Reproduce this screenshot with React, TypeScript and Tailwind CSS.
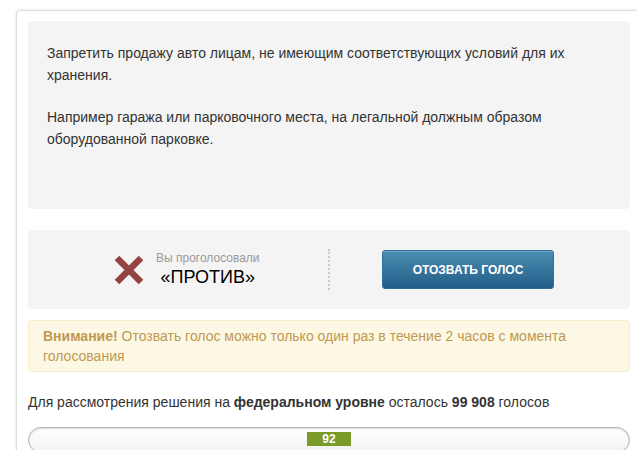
import React from "react";

function CrossMark() {
  return (
    <svg width="30" height="30" viewBox="0 0 30 30" className="shrink-0">
      <path d="M3 3 L27 27 M27 3 L3 27" stroke="#944343" strokeWidth="6.5" strokeLinecap="butt" />
    </svg>
  );
}

export default function App() {
  return (
    <div className="w-[637px] h-[450px] overflow-hidden bg-white font-['Liberation_Sans',Arial,sans-serif]">
      <div className="ml-[16px] mt-[10px] w-[626px] rounded-[4px] border border-[#dcdcdc] bg-white px-[11px] pt-[10px] pb-[20px] shadow-[0_0_3px_rgba(0,0,0,0.12)]">
        {/* description */}
        <div className="h-[188px] rounded-[4px] bg-[#f4f4f4] pl-[19px] pr-[19px] pt-[21px] text-[14px] leading-[22px] text-[#333]">
          <p>Запретить продажу авто лицам, не имеющим соответствующих условий для их хранения.</p>
          <p className="mt-[20px]">Например гаража или парковочного места, на легальной должным образом оборудованной парковке.</p>
        </div>

        {/* vote status */}
        <div className="mt-[21px] flex h-[79px] items-center rounded-[4px] bg-[#f4f4f4]">
          <div className="flex w-[300px] items-center pl-[86px]">
            <CrossMark />
            <div className="ml-[12px] flex flex-col items-center">
              <span className="text-[12px] leading-[14px] text-[#999]">Вы проголосовали</span>
              <span className="mt-[1px] text-[18px] leading-[22px] text-black">«ПРОТИВ»</span>
            </div>
          </div>
          <div className="h-[41px] border-l-2 border-dotted border-[#c8c8c8]" />
          <button className="ml-[52px] h-[39px] w-[172px] rounded-[3px] border border-[#2f6f9a] bg-gradient-to-b from-[#4a8db3] to-[#235f88] text-[12px] font-bold text-white shadow-[inset_0_1px_0_rgba(255,255,255,0.2)]">
            ОТОЗВАТЬ ГОЛОС
          </button>
        </div>

        {/* warning */}
        <div className="mt-[11px] rounded-[4px] border border-[#faebcc] bg-[#fcf8e3] py-[5px] pl-[14px] pr-[30px] text-[14px] leading-[20px] text-[#c09853]">
          <b>Внимание!</b> Отозвать голос можно только один раз в течение 2 часов с момента голосования
        </div>

        <p className="mt-[19px] text-[14px] leading-[22px] text-[#333]">
          Для рассмотрения решения на <b>федеральном уровне</b> осталось <b>99 908</b> голосов
        </p>

        {/* progress */}
        <div className="mt-[14px] flex h-[26px] items-start justify-center rounded-full border border-[#b4b4b4] bg-gradient-to-b from-white to-[#f2f2f2] shadow-[inset_0_1px_2px_rgba(0,0,0,0.15)]">
          <div className="mt-[4px] flex h-[14px] w-[44px] items-center justify-center bg-[#7c9a27] text-[12px] font-bold leading-none text-white">
            92
          </div>
        </div>
      </div>
    </div>
  );
}
